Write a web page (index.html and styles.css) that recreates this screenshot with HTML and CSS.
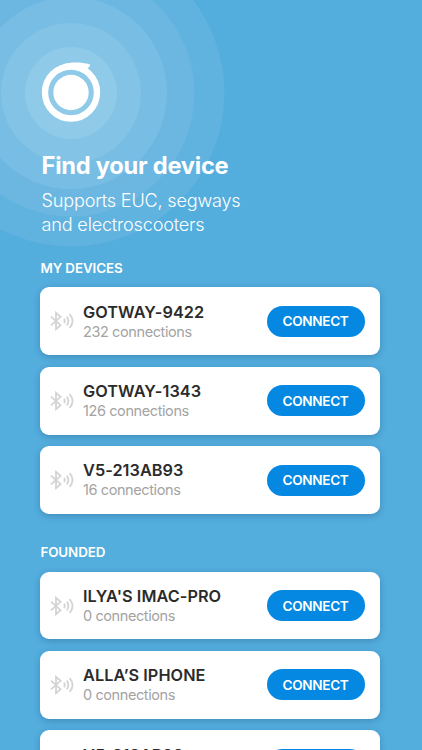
FILE: index.html
```html
<!DOCTYPE html>
<html lang="en">
<head>
    <meta charset="UTF-8">
    <meta name="viewport" content="width=device-width, initial-scale=1.0">
    <title>Find your device</title>
    <link rel="stylesheet" href="styles.css">
</head>
<body>
    <!-- Shared icon -->
    <svg class="sprite" aria-hidden="true">
        <symbol id="bluetooth" viewBox="0 0 24 20">
            <path d="M1 5.6 L10.6 14.2 L6 18.2 V1.8 L10.6 5.8 L1 14.4" stroke-width="1.8"/>
            <path d="M14 7.9 Q15.6 10 14 12.1" stroke-width="1.8"/>
            <path d="M16.8 5.6 Q20 10 16.8 14.4" stroke-width="1.8"/>
            <path d="M19.6 3.2 Q25.6 10 19.6 16.8" stroke-width="1.8"/>
        </symbol>
    </svg>

    <div class="screen">
        <div class="radar">
            <div class="ring ring-5"></div>
            <div class="ring ring-4"></div>
            <div class="ring ring-3"></div>
            <div class="ring ring-2"></div>
            <div class="ring ring-1"></div>
        </div>

        <header class="header">
            <svg class="logo" viewBox="0 0 60 62">
                <circle cx="30" cy="31.5" r="26" fill="none" stroke="#fff" stroke-width="6.4"/>
                <circle cx="30" cy="31.5" r="17.7" fill="#fff"/>
                <path d="M22 3.4 C30 0.6 40 1.2 48.2 3 Q49.8 4 48.6 5.4 L46.6 7.2 L49.5 10 L42 11 L28 7 Z" fill="#fff"/>
            </svg>
            <h1>Find your device</h1>
            <p>Supports EUC, segways<br>and electroscooters</p>
        </header>

        <section class="section">
            <h2>MY DEVICES</h2>
            <div class="card">
                <svg class="icon"><use href="#bluetooth"/></svg>
                <div class="info">
                    <div class="name">GOTWAY-9422</div>
                    <div class="count">232 connections</div>
                </div>
                <button class="btn">CONNECT</button>
            </div>
            <div class="card">
                <svg class="icon"><use href="#bluetooth"/></svg>
                <div class="info">
                    <div class="name">GOTWAY-1343</div>
                    <div class="count">126 connections</div>
                </div>
                <button class="btn">CONNECT</button>
            </div>
            <div class="card">
                <svg class="icon"><use href="#bluetooth"/></svg>
                <div class="info">
                    <div class="name">V5-213AB93</div>
                    <div class="count">16 connections</div>
                </div>
                <button class="btn">CONNECT</button>
            </div>
        </section>

        <section class="section">
            <h2>FOUNDED</h2>
            <div class="card">
                <svg class="icon"><use href="#bluetooth"/></svg>
                <div class="info">
                    <div class="name">ILYA'S IMAC-PRO</div>
                    <div class="count">0 connections</div>
                </div>
                <button class="btn">CONNECT</button>
            </div>
            <div class="card">
                <svg class="icon"><use href="#bluetooth"/></svg>
                <div class="info">
                    <div class="name">ALLA’S IPHONE</div>
                    <div class="count">0 connections</div>
                </div>
                <button class="btn">CONNECT</button>
            </div>
            <div class="card">
                <svg class="icon"><use href="#bluetooth"/></svg>
                <div class="info">
                    <div class="name">V5-213AB93</div>
                    <div class="count">0 connections</div>
                </div>
                <button class="btn">CONNECT</button>
            </div>
        </section>
    </div>
</body>
</html>
```

FILE: styles.css
```css
* {
    margin: 0;
    padding: 0;
    box-sizing: border-box;
}

body {
    font-family: Inter, "Liberation Sans", sans-serif;
    background: #53addd;
}

.sprite {
    display: none;
}

.screen {
    position: relative;
    height: 750px;
    padding: 61px 42px 0 40px;
    overflow: hidden;
}

/* Circles spreading out from behind the logo */
.radar {
    position: absolute;
    top: 92.5px;
    left: 70.5px;
}

.ring {
    position: absolute;
    border-radius: 50%;
    transform: translate(-50%, -50%);
}

.ring-1 { width: 92px; height: 92px; background: #8fcae9; }
.ring-2 { width: 140px; height: 140px; background: #83c3e6; }
.ring-3 { width: 192px; height: 192px; background: #78bde4; }
.ring-4 { width: 247px; height: 247px; background: #6cb7e1; }
.ring-5 { width: 307px; height: 307px; background: #60b2df; }

.header {
    position: relative;
    padding-left: 1px;
    height: 200px;
    color: #fff;
}

.logo {
    display: block;
    width: 60px;
    height: 62px;
}

.header h1 {
    margin: 27px 0 0 0.6px;
    font-size: 23.7px;
    font-weight: 700;
    line-height: 32px;
    letter-spacing: -0.28px;
}

.header p {
    margin: 6px 0 0 0.6px;
    font-size: 18.1px;
    font-weight: 350;
    line-height: 24px;
    letter-spacing: -0.2px;
}

.section {
    position: relative;
    margin-bottom: 31.3px;
}

.section h2 {
    height: 26.4px;
    padding-left: 0.4px;
    color: #fff;
    font-size: 13.4px;
    font-weight: 600;
    line-height: 14px;
    letter-spacing: -0.1px;
}

.card {
    display: flex;
    align-items: center;
    height: 67.8px;
    margin-bottom: 11.6px;
    padding: 0 15.5px 0 9.5px;
    background: #fff;
    border-radius: 9px;
    box-shadow: 0 2px 6px rgba(20, 70, 110, 0.3);
}

.icon {
    width: 24px;
    height: 20px;
    fill: none;
    stroke: #d4d4d4;
}

.info {
    flex: 1;
    margin-left: 9.5px;
    padding-top: 0.8px;
    white-space: nowrap;
}

.name {
    color: #2b2b2b;
    font-size: 16.3px;
    font-weight: 600;
    line-height: 20px;
    letter-spacing: 0.05px;
}

.count {
    color: #a3a3a3;
    font-size: 14.5px;
    font-weight: 400;
    line-height: 20px;
    letter-spacing: -0.4px;
}

.btn {
    width: 98px;
    height: 31px;
    background: #0588e2;
    color: #fff;
    border: none;
    border-radius: 16px;
    font-family: inherit;
    font-size: 13.6px;
    font-weight: 600;
    letter-spacing: -0.35px;
    cursor: pointer;
}
```
